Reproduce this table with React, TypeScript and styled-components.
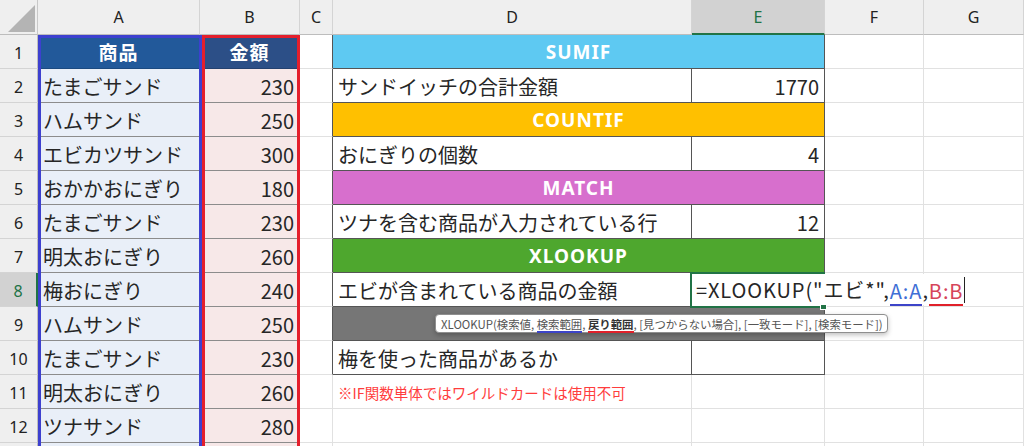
import React from "react";
import styled, { createGlobalStyle } from "styled-components";

const GRID = "#e1e1e1";
const DARK = "#555555";
const DATA_LINE = "#8c8c8c";
const GREEN = "#217346";
const JP = `"Noto Sans CJK JP", "Noto Sans", sans-serif`;
const UI = `"Noto Sans", "Liberation Sans", sans-serif`;

const Global = createGlobalStyle`
  html, body { margin: 0; padding: 0; background: #fff; }
  body { font-family: ${JP}; }
`;

const Sheet = styled.div`
  position: relative;
  width: 1024px;
  height: 446px;
  overflow: hidden;
  display: grid;
  grid-template-columns: 38px 162px 100px 33px 359px 133px 99px 100px;
  grid-template-rows: 35px repeat(13, 34px);
  font-family: ${JP};
`;

const Corner = styled.div`
  box-sizing: border-box;
  background: #efefef;
  border-right: 1px solid #c8c8c8;
  border-bottom: 1px solid #bdbdbd;
  position: relative;
  svg { position: absolute; left: 0; top: 0; }
`;

const ColHead = styled.div<{ $active?: boolean }>`
  box-sizing: border-box;
  display: flex;
  align-items: center;
  justify-content: center;
  background: ${(p) => (p.$active ? "#d2d2d2" : "#efefef")};
  color: ${(p) => (p.$active ? GREEN : "#222")};
  border-right: 1px solid #d4d4d4;
  border-bottom: ${(p) => (p.$active ? `2px solid ${GREEN}` : "1px solid #bdbdbd")};
  font-family: ${UI};
  font-size: 16px;
  padding-top: ${(p) => (p.$active ? "1px" : "0")};
`;

const RowHead = styled.div<{ $active?: boolean }>`
  box-sizing: border-box;
  display: flex;
  align-items: center;
  justify-content: center;
  background: ${(p) => (p.$active ? "#d2d2d2" : "#efefef")};
  color: ${(p) => (p.$active ? GREEN : "#222")};
  border-right: ${(p) => (p.$active ? `2px solid ${GREEN}` : "1px solid #bdbdbd")};
  border-bottom: 1px solid #d4d4d4;
  font-family: ${UI};
  font-size: 16px;
  padding-top: 2px;
`;

type CellProps = {
  $bg?: string;
  $r?: string;
  $b?: string;
  $align?: "left" | "right" | "center";
  $color?: string;
  $bold?: boolean;
  $span?: number;
  $size?: number;
};

const Cell = styled.div<CellProps>`
  box-sizing: border-box;
  display: flex;
  align-items: center;
  justify-content: ${(p) =>
    p.$align === "right" ? "flex-end" : p.$align === "center" ? "center" : "flex-start"};
  padding: 1px 5px 0 5px;
  background: ${(p) => p.$bg ?? "#fff"};
  border-right: 1px solid ${(p) => p.$r ?? GRID};
  border-bottom: 1px solid ${(p) => p.$b ?? GRID};
  grid-column: span ${(p) => p.$span ?? 1};
  font-size: ${(p) => p.$size ?? 20}px;
  color: ${(p) => p.$color ?? "#262626"};
  font-weight: ${(p) => (p.$bold ? 700 : 400)};
  white-space: nowrap;
  position: relative;
`;

const TitleText = styled.span`
  font-family: "Noto Sans", ${JP};
  font-weight: 700;
  font-size: 19px;
  letter-spacing: 1px;
  color: #fff;
`;

const Range = styled.div<{ $color: string; $left: number; $width: number }>`
  position: absolute;
  left: ${(p) => p.$left}px;
  top: 35px;
  width: ${(p) => p.$width}px;
  height: 440px;
  box-sizing: border-box;
  border: 3px solid ${(p) => p.$color};
  pointer-events: none;
  z-index: 3;
`;

const Frame = styled.div`
  position: absolute;
  left: -2px;
  top: -1px;
  width: 135px;
  height: 36px;
  box-sizing: border-box;
  border: 2px solid ${GREEN};
  z-index: 4;
`;

const Handle = styled.div`
  position: absolute;
  right: -4px;
  bottom: -4px;
  width: 5px;
  height: 5px;
  background: ${GREEN};
  border: 1px solid #fff;
  z-index: 6;
`;

const Editor = styled.div`
  position: absolute;
  left: 0px;
  top: 1px;
  height: 31px;
  width: 279px;
  background: #fff;
  z-index: 5;
  display: flex;
  align-items: center;
  padding-left: 4px;
  box-sizing: border-box;
  font-size: 20px;
  letter-spacing: 0.9px;
  color: #262626;
  white-space: nowrap;
`;

const Ref = styled.span<{ $color: string; $line: string }>`
  color: ${(p) => p.$color};
  border-bottom: 2px solid ${(p) => p.$line};
  line-height: 26px;
  margin-top: 4px;
`;

const Caret = styled.span`
  display: inline-block;
  width: 1px;
  height: 26px;
  background: #222;
  margin-left: 1px;
`;

const Tooltip = styled.div`
  position: absolute;
  left: 435px;
  top: 314px;
  height: 19px;
  box-sizing: border-box;
  padding: 0 4px 0 5px;
  display: flex;
  align-items: center;
  background: #fff;
  border: 1px solid #8f8f8f;
  border-radius: 4px;
  box-shadow: 0 2px 5px rgba(0, 0, 0, 0.25);
  font-size: 11.4px;
  color: #555;
  white-space: nowrap;
  z-index: 7;
`;

const Arg = styled.span<{ $line: string; $bold?: boolean }>`
  font-weight: ${(p) => (p.$bold ? 700 : 400)};
  color: ${(p) => (p.$bold ? "#333" : "#555")};
  border-bottom: 2px solid ${(p) => p.$line};
  line-height: 14px;
  margin-top: 2px;
`;

const products: [string, number][] = [
  ["たまごサンド", 230],
  ["ハムサンド", 250],
  ["エビカツサンド", 300],
  ["おかかおにぎり", 180],
  ["たまごサンド", 230],
  ["明太おにぎり", 260],
  ["梅おにぎり", 240],
  ["ハムサンド", 250],
  ["たまごサンド", 230],
  ["明太おにぎり", 260],
  ["ツナサンド", 280],
];

const A_BG = "#e9eff8";
const B_BG = "#f7e8e8";

type Right =
  | { kind: "title"; text: string; bg: string }
  | { kind: "row"; label: string; value: string }
  | { kind: "edit"; label: string }
  | { kind: "gray" }
  | { kind: "note"; text: string }
  | { kind: "empty" };

const right: Right[] = [
  { kind: "title", text: "SUMIF", bg: "#5ec9f2" },
  { kind: "row", label: "サンドイッチの合計金額", value: "1770" },
  { kind: "title", text: "COUNTIF", bg: "#ffc000" },
  { kind: "row", label: "おにぎりの個数", value: "4" },
  { kind: "title", text: "MATCH", bg: "#d76fcd" },
  { kind: "row", label: "ツナを含む商品が入力されている行", value: "12" },
  { kind: "title", text: "XLOOKUP", bg: "#4ea72e" },
  { kind: "edit", label: "エビが含まれている商品の金額" },
  { kind: "gray" },
  { kind: "row", label: "梅を使った商品があるか", value: "" },
  { kind: "note", text: "※IF関数単体ではワイルドカードは使用不可" },
  { kind: "empty" },
  { kind: "empty" },
];

function RightCells({ r }: { r: Right }) {
  switch (r.kind) {
    case "title":
      return (
        <Cell $span={2} $bg={r.bg} $r={DARK} $b={DARK} $align="center">
          <TitleText>{r.text}</TitleText>
        </Cell>
      );
    case "row":
      return (
        <>
          <Cell $r={DARK} $b={DARK}>{r.label}</Cell>
          <Cell $r={DARK} $b={DARK} $align="right">{r.value}</Cell>
        </>
      );
    case "edit":
      return (
        <>
          <Cell $r={DARK} $b={DARK}>{r.label}</Cell>
          <Cell $r={DARK} $b={DARK}>
            <Frame>
              <Handle />
            </Frame>
            <Editor>
              =XLOOKUP("エビ*",
              <Ref $color="#3f6fd6" $line="#3c44c8">A:A</Ref>,
              <Ref $color="#d6455a" $line="#e0202a">B:B</Ref>
              <Caret />
            </Editor>
          </Cell>
        </>
      );
    case "gray":
      return <Cell $span={2} $bg="#767676" $r={DARK} $b={DARK} />;
    case "note":
      return (
        <>
          <Cell $size={14.5} $color="#ff3d3d">{r.text}</Cell>
          <Cell />
        </>
      );
    default:
      return (
        <>
          <Cell />
          <Cell />
        </>
      );
  }
}

export default function App() {
  const cols = ["A", "B", "C", "D", "E", "F", "G"];
  return (
    <>
      <Global />
      <Sheet>
        <Corner>
          <svg width="38" height="35" viewBox="0 0 38 35">
            <polygon points="8,32 35,32 35,5" fill="#b4b4b4" />
          </svg>
        </Corner>
        {cols.map((c) => (
          <ColHead key={c} $active={c === "E"}>{c}</ColHead>
        ))}

        {right.map((r, i) => {
          const row = i + 1;
          const inTable = row <= 10;
          return (
            <React.Fragment key={row}>
              <RowHead $active={row === 8}>{row <= 12 ? row : ""}</RowHead>
              {row === 1 ? (
                <>
                  <Cell $bg="#22599a" $b="#1c4a80" $align="center">
                    <TitleText>商品</TitleText>
                  </Cell>
                  <Cell $bg="#2c4f87" $b="#24416f" $align="center">
                    <TitleText>金額</TitleText>
                  </Cell>
                </>
              ) : row <= 12 ? (
                <>
                  <Cell $bg={A_BG} $b={DATA_LINE}>{products[row - 2][0]}</Cell>
                  <Cell $bg={B_BG} $b={DATA_LINE} $align="right">
                    {products[row - 2][1]}
                  </Cell>
                </>
              ) : (
                <>
                  <Cell $bg={A_BG} $b={DATA_LINE} />
                  <Cell $bg={B_BG} $b={DATA_LINE} />
                </>
              )}
              <Cell $r={inTable ? DARK : GRID} />
              <RightCells r={r} />
              <Cell />
              <Cell />
            </React.Fragment>
          );
        })}

        <Range $color="#3d40cf" $left={38} $width={164} />
        <Range $color="#e41f2c" $left={202} $width={98} />

        <Tooltip>
          XLOOKUP(検索値,&nbsp;<Arg $line="#3c44c8">検索範囲</Arg>,&nbsp;
          <Arg $line="#e0202a" $bold>戻り範囲</Arg>, [見つからない場合], [一致モード], [検索モード])
        </Tooltip>
      </Sheet>
    </>
  );
}
